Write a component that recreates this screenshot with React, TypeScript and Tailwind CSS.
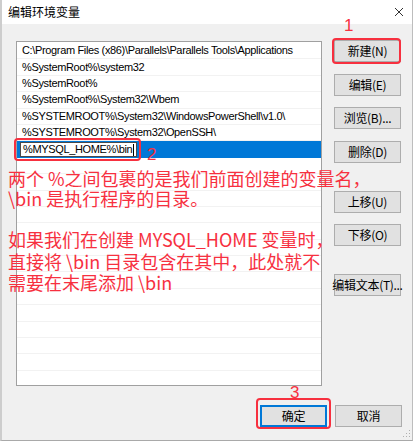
const paths = [
  'C:\\Program Files (x86)\\Parallels\\Parallels Tools\\Applications',
  '%SystemRoot%\\system32',
  '%SystemRoot%',
  '%SystemRoot%\\System32\\Wbem',
  '%SYSTEMROOT%\\System32\\WindowsPowerShell\\v1.0\\',
  '%SYSTEMROOT%\\System32\\OpenSSH\\',
];

const ui = { fontFamily: '"Liberation Sans", "Noto Sans CJK SC", sans-serif' };
const cjk = { fontFamily: '"Noto Sans CJK SC", "Liberation Sans", sans-serif' };

function Btn({ label, className = '', primary }: { label: string; className?: string; primary?: boolean }) {
  return (
    <div
      className={`w-[67px] h-[22px] flex items-center justify-center text-[12px] leading-none whitespace-nowrap tracking-[-0.3px] text-black bg-[#e1e1e1] ${
        primary ? 'border-2 border-[#0078d7]' : 'border border-[#adadad]'
      } ${className}`}
      style={cjk}
    >
      {label}
    </div>
  );
}

export default function App() {
  const empty = Array.from({ length: 14 });
  return (
    <div className="relative w-[413px] h-[442px] overflow-hidden bg-white">
      <div className="w-[413px] h-[441px] bg-[#f0f0f0] border-l-2 border-l-[#cdcdcd] border-r border-r-[#bdbdbd] border-b border-b-[#a9a9a9] flex flex-col">
        {/* title bar */}
        <div className="h-[24px] bg-white flex items-center justify-between pl-[6px] pr-[7px] shrink-0">
          <span className="text-[12px] text-black" style={cjk}>编辑环境变量</span>
          <svg width="10" height="10" viewBox="0 0 10 10" className="mr-[1px]">
            <path d="M1 1L9 9M9 1L1 9" stroke="#333" strokeWidth="1" />
          </svg>
        </div>

        {/* body */}
        <div className="flex pl-[14px] pt-[17px] gap-[12px]">
          <div className="w-[306px] h-[345px] border border-[#a0a0a0] bg-white overflow-hidden pt-px">
            {paths.map((p) => (
              <div
                key={p}
                className="h-[16.4px] flex items-center pl-[5px] text-[11px] tracking-[-0.35px] leading-none text-black border-b border-[#f2f2f2] whitespace-nowrap"
                style={ui}
              >
                {p}
              </div>
            ))}
            <div className="h-[16.4px] bg-[#0078d7] flex items-center pl-[3px]">
              <div className="w-[117px] h-[15px] bg-white border border-[#4a4a4a] flex items-center pl-[2px]">
                <span className="text-[11px] tracking-[-0.35px] leading-none text-black" style={ui}>%MYSQL_HOME%\bin</span>
                <span className="w-px h-[12px] bg-black ml-px" />
              </div>
            </div>
            {empty.map((_, i) => (
              <div key={i} className="h-[16.4px] border-b border-[#f2f2f2]" />
            ))}
          </div>

          <div className="flex flex-col -mt-px">
            <Btn label="新建(N)" />
            <Btn label="编辑(E)" className="mt-[12px]" />
            <Btn label="浏览(B)..." className="mt-[11px]" />
            <Btn label="删除(D)" className="mt-[12px]" />
            <Btn label="上移(U)" className="mt-[28px]" />
            <Btn label="下移(O)" className="mt-[11px]" />
            <Btn label="编辑文本(T)..." className="mt-[28px]" />
          </div>
        </div>

        {/* footer */}
        <div className="flex justify-end gap-[8px] pr-[10px] mt-[19px]">
          <Btn label="确定" primary />
          <Btn label="取消" />
        </div>
      </div>

      {/* resize grip */}
      <svg width="8" height="8" viewBox="0 0 8 8" className="absolute left-[403px] top-[430px]">
        <rect x="6" y="0" width="1" height="1" fill="#b0b0b0" />
        <rect x="3" y="3" width="1" height="1" fill="#b0b0b0" />
        <rect x="6" y="3" width="1" height="1" fill="#b0b0b0" />
        <rect x="0" y="6" width="1" height="1" fill="#b0b0b0" />
        <rect x="3" y="6" width="1" height="1" fill="#b0b0b0" />
        <rect x="6" y="6" width="1" height="1" fill="#b0b0b0" />
      </svg>

      {/* annotations */}
      <div className="absolute left-[332px] top-[38px] w-[69px] h-[26px] border-2 border-[#f7303f] rounded-[4px]" />
      <div className="absolute left-[14px] top-[138px] w-[127px] h-[23px] border-2 border-[#f7303f] rounded-[4px]" />
      <div className="absolute left-[256px] top-[398px] w-[75px] h-[31px] border-2 border-[#f7303f] rounded-[4px]" />

      <span className="absolute left-[344px] top-[17px] text-[17px] leading-none text-[#f7303f]" style={ui}>1</span>
      <span className="absolute left-[147px] top-[146px] text-[17px] leading-none text-[#f7303f]" style={ui}>2</span>
      <span className="absolute left-[290px] top-[384px] text-[17px] leading-none text-[#f7303f]" style={ui}>3</span>

      <div className="absolute left-[8px] top-[168px] text-[18px] leading-[20px] text-[#f7303f] whitespace-nowrap" style={cjk}>
        <div>两个 %之间包裹的是我们前面创建的变量名，</div>
        <div>\bin 是执行程序的目录。</div>
      </div>
      <div className="absolute left-[8px] top-[229px] text-[18px] leading-[21.5px] text-[#f7303f] whitespace-nowrap" style={cjk}>
        <div>如果我们在创建 MYSQL_HOME 变量时，</div>
        <div>直接将 \bin 目录包含在其中，此处就不</div>
        <div>需要在末尾添加 \bin</div>
      </div>
    </div>
  );
}
